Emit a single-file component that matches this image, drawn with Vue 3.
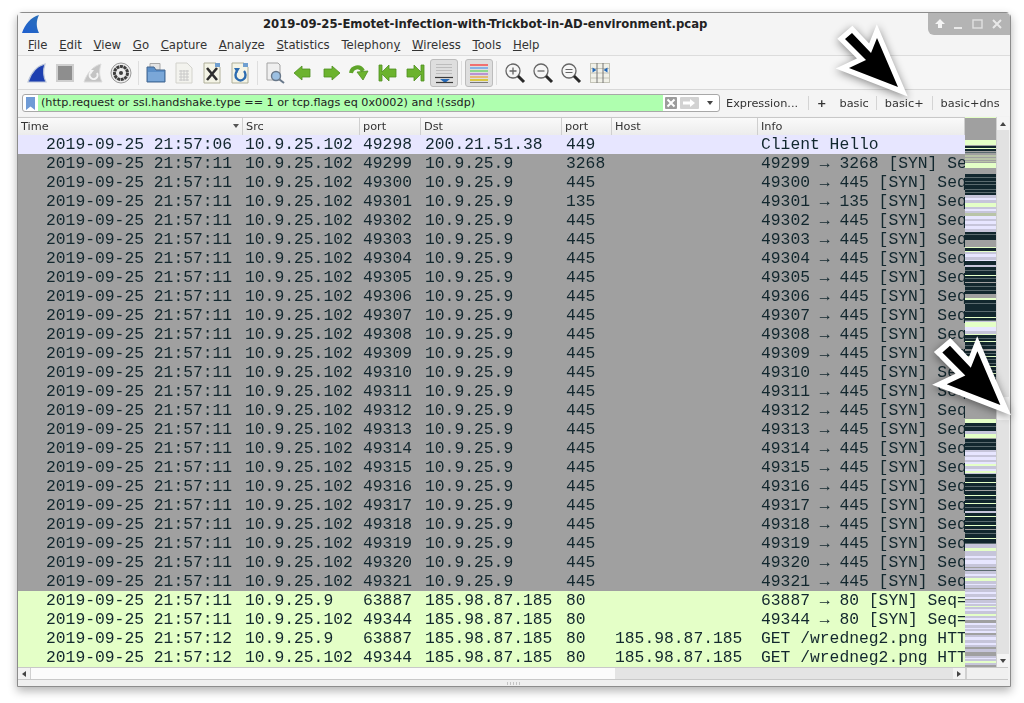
<script setup>
const menus = [
  ['F', 'ile'], ['E', 'dit'], ['V', 'iew'], ['G', 'o'], ['C', 'apture'], ['A', 'nalyze'],
  ['S', 'tatistics'], ['Telephon', 'y'], ['W', 'ireless'], ['T', 'ools'], ['H', 'elp'],
]

const columns = ['Time', 'Src', 'port', 'Dst', 'port', 'Host', 'Info']

const rows = [
  { kind: 'sel', time: '21:57:06', src: '10.9.25.102', sport: 49298, dst: '200.21.51.38', dport: 449, host: '', info: 'Client Hello' },
]

// the block of gray SYN rows, all to the DC
for (let port = 49299; port <= 49321; port++) {
  const dport = port === 49299 ? 3268 : port === 49301 ? 135 : 445
  rows.push({
    kind: 'gray',
    time: '21:57:11',
    src: '10.9.25.102',
    sport: port,
    dst: '10.9.25.9',
    dport,
    host: '',
    info: `${port} → ${dport} [SYN] Seq=0 Win=8192 Len=0`,
  })
}

rows.push(
  { kind: 'green', time: '21:57:11', src: '10.9.25.9', sport: 63887, dst: '185.98.87.185', dport: 80, host: '', info: '63887 → 80 [SYN] Seq=0 Win=8192' },
  { kind: 'green', time: '21:57:11', src: '10.9.25.102', sport: 49344, dst: '185.98.87.185', dport: 80, host: '', info: '49344 → 80 [SYN] Seq=0 Win=8192' },
  { kind: 'green', time: '21:57:12', src: '10.9.25.9', sport: 63887, dst: '185.98.87.185', dport: 80, host: '185.98.87.185', info: 'GET /wredneg2.png HTTP/1.1' },
  { kind: 'green', time: '21:57:12', src: '10.9.25.102', sport: 49344, dst: '185.98.87.185', dport: 80, host: '185.98.87.185', info: 'GET /wredneg2.png HTTP/1.1' },
)

// minimap stripes, colour key + height in px
const palette = {
  G: '#a0a0a0', L: '#e4ffc7', D: '#12272e', V: '#e7e6ff', M: '#c6c5da', X: '#5a6a6e', A: '#b9c4a8',
}
const stripes = [
  'L1 G22 L5 G1 D2 L1 D2 G1 X1 G2 A2 G1 A2 G1 A1 G1 L5 G6',
  'D3 X1 D3 X1 D2 X1 D4 X1 D2 X1 D2 M3 V2 M3 L4 M2 V2 M2 A3 V3 M2 V3 M2 V3 M3 D2 X1 D2 D3 G7',
  'L1 D3 L1 M2 V3 M3 V1 D4 M2 D3 X1 D4 L1 D2 X1 D3 G1 D3 X1 D3 X1 D3 G4 L2 D3 X1 D4 D3 X1 D3',
  'D2 L1 D2 X1 M1 L5 V4 M3 L1 D3 X1 D2 L1 D3 X1 D3 G2 D2 X1 D2 L1 D2 X1 D3 X1 D2 L1 D3 X1 D2 L1 D3 X1 D4 G1 D3 X1 D2 D3 X1 D3',
  'G23 L4 D3 X1 D4 M3 L4 G1 D3 X1 D3 X1 D3 M2 V3 M2 V3 M2 V2 L2 M3 V2 L2 M1 D3 X1 D4 L1 D3 X1 D3 G1 D4 L1 D3 X1 D3 L1 D3 X1 D3 M2',
  'D3 L1 D4 X1 D3 L1 D3 G1 D3 X1 D4 L1 D4 X1 M4',
  'L3 M2 M3 V2 M2 V4 M3 G1 M2 X1 M3 V2 M2 L3 M3 V1 M3 G1 M3 V2 M3 V2 G1 M3 V1 M2 L1 M2 V2 M3 L2 M2 V2 G3 V2 M3 V1 M2 V2 G2 M2 V3 M3 V2 M2 G2 M3 G4 M2 V1 M2 L2 M2',
]
const minimap = stripes.join(' ').split(' ').map((s) => ({
  color: palette[s[0]],
  height: Number(s.slice(1)),
}))
</script>

<template>
  <div class="page">
    <div class="window">
      <div class="titlebar">
        <svg class="logo" width="20" height="20" viewBox="0 0 20 20">
          <defs>
            <linearGradient id="fin" x1="0" y1="1" x2="1" y2="0">
              <stop offset="0" stop-color="#1f5fd0" />
              <stop offset="1" stop-color="#2a6fb8" />
            </linearGradient>
          </defs>
          <path d="M18 1 C10 3 4 10 1 19 L18 19 C15 13 15 7 18 1 Z" fill="url(#fin)" />
        </svg>
        <div class="title">2019-09-25-Emotet-infection-with-Trickbot-in-AD-environment.pcap</div>
        <div class="controls">
          <svg width="74" height="14" viewBox="0 0 74 14">
            <path d="M8 2 L13 7 L10 7 L10 11 L6 11 L6 7 L3 7 Z" fill="#fff" opacity=".85" />
            <rect x="22" y="10" width="8" height="2" fill="#fff" opacity=".7" />
            <rect x="41" y="3" width="9" height="8" fill="none" stroke="#fff" stroke-width="1.4" opacity=".6" />
            <path d="M61 3 L69 11 M69 3 L61 11" stroke="#fff" stroke-width="2" opacity=".7" />
          </svg>
        </div>
      </div>

      <div class="menubar">
        <span v-for="(m, i) in menus" :key="i" class="menu-item">
          <template v-if="m[0] === 'Telephon'">Telephon<u>y</u></template>
          <template v-else><u>{{ m[0] }}</u>{{ m[1] }}</template>
        </span>
      </div>

      <div class="toolbar">
        <div class="tool">
          <svg width="22" height="22" viewBox="0 0 22 22">
            <path d="M19 2 C11 4 5 11 2 20 L20 20 C17 14 17 8 19 2 Z" fill="#1d3fb0" stroke="#b9c4d8" stroke-width="1.2" />
          </svg>
        </div>
        <div class="tool">
          <svg width="22" height="22" viewBox="0 0 22 22">
            <rect x="3" y="3" width="16" height="16" fill="#8e8e8e" stroke="#cfcfcf" stroke-width="2" />
          </svg>
        </div>
        <div class="tool">
          <svg width="22" height="22" viewBox="0 0 22 22">
            <path d="M19 2 C11 4 5 11 2 20 L20 20 C17 14 17 8 19 2 Z" fill="#c4c4c4" stroke="#dcdcdc" />
            <path d="M15 11 A4 4 0 1 1 9 10" fill="none" stroke="#f4f4f4" stroke-width="2" />
            <path d="M7 8 L12 8 L9 12 Z" fill="#f4f4f4" />
          </svg>
        </div>
        <div class="tool">
          <svg width="22" height="22" viewBox="0 0 22 22">
            <circle cx="11" cy="11" r="10" fill="#ececec" stroke="#9a9a9a" />
            <circle cx="11" cy="11" r="6.5" fill="none" stroke="#3e3e3e" stroke-width="3" stroke-dasharray="3 .6" />
            <circle cx="11" cy="11" r="2" fill="#3e3e3e" />
          </svg>
        </div>
        <div class="sep"></div>
        <div class="tool">
          <svg width="22" height="22" viewBox="0 0 22 22">
            <path d="M5 4 L5 1.5 L15 1.5 L15 8 L5 8 Z" fill="#e4e4e4" stroke="#a8a8a8" />
            <path d="M2 5 L9 5 L11 8 L20 8 L20 20 L2 20 Z" fill="#5b8fc8" stroke="#44678f" />
            <rect x="3" y="10" width="16" height="9" fill="#7aa7d8" />
          </svg>
        </div>
        <div class="tool">
          <svg width="22" height="22" viewBox="0 0 22 22">
            <path d="M3 1 L14 1 L19 6 L19 21 L3 21 Z" fill="#f3f3ee" stroke="#d2d2cc" />
            <path d="M6 9 H16 M6 12 H16 M6 15 H16 M6 18 H16 M8 8 V19 M11 8 V19 M14 8 V19" stroke="#c8c8c8" stroke-width="1" />
          </svg>
        </div>
        <div class="tool">
          <svg width="22" height="22" viewBox="0 0 22 22">
            <path d="M3 1 L15 1 L19 5 L19 21 L3 21 Z" fill="#f4f4e6" stroke="#b0b09a" />
            <rect x="14" y="1" width="5" height="4" fill="#6f9fd0" />
            <path d="M6 6 L16 18 M16 6 L6 18" stroke="#2e2e2e" stroke-width="2.6" />
          </svg>
        </div>
        <div class="tool">
          <svg width="22" height="22" viewBox="0 0 22 22">
            <path d="M3 1 L15 1 L19 5 L19 21 L3 21 Z" fill="#f4f4e6" stroke="#b0b09a" />
            <rect x="14" y="1" width="5" height="4" fill="#6f9fd0" />
            <path d="M15 9 A5 5.5 0 1 1 8 9" fill="none" stroke="#2c6cb0" stroke-width="2.4" />
            <path d="M5 6 L11 6 L8 11 Z" fill="#2c6cb0" />
          </svg>
        </div>
        <div class="sep"></div>
        <div class="tool">
          <svg width="22" height="22" viewBox="0 0 22 22">
            <path d="M3 1 L14 1 L16 3 L16 18 L3 18 Z" fill="#efefef" stroke="#a4a4a4" />
            <circle cx="12" cy="14" r="4.5" fill="#9cc0e2" stroke="#68788a" stroke-width="1.4" />
            <path d="M15.5 17.5 L20 21" stroke="#68788a" stroke-width="2" />
          </svg>
        </div>
        <div class="tool">
          <svg width="22" height="22" viewBox="0 0 22 22">
            <path class="go" d="M2 11 L10 4 L10 7 L18 7 L18 15 L10 15 L10 18 Z" />
          </svg>
        </div>
        <div class="tool">
          <svg width="22" height="22" viewBox="0 0 22 22">
            <path class="go" d="M20 11 L12 4 L12 7 L4 7 L4 15 L12 15 L12 18 Z" />
          </svg>
        </div>
        <div class="tool">
          <svg width="22" height="22" viewBox="0 0 22 22">
            <path d="M3 11 C4 5 12 3 15 9" fill="none" stroke="#5fa52a" stroke-width="4" />
            <path class="go" d="M20 9 L15 18 L9 10 Z" />
          </svg>
        </div>
        <div class="tool">
          <svg width="22" height="22" viewBox="0 0 22 22">
            <path class="go" d="M3 3 L6 3 L6 10 L13 3 L13 7 L20 7 L20 15 L13 15 L13 19 L6 12 L6 19 L3 19 Z" />
          </svg>
        </div>
        <div class="tool">
          <svg width="22" height="22" viewBox="0 0 22 22">
            <path class="go" d="M20 3 L17 3 L17 10 L10 3 L10 7 L3 7 L3 15 L10 15 L10 19 L17 12 L17 19 L20 19 Z" />
          </svg>
        </div>
        <div class="tool pressed first-pressed">
          <svg width="22" height="22" viewBox="0 0 22 22">
            <path d="M3 2.5 H19 M3 5.5 H19 M3 8.5 H19 M3 11.5 H19" stroke="#bcbcbc" />
            <path d="M2 15.5 H20" stroke="#3c3c3c" stroke-width="1.2" />
            <path d="M7 17 H17 L12 21 Z" fill="#2368b8" />
            <path d="M3 20.5 H20" stroke="#3c3c3c" stroke-width="1.2" />
          </svg>
        </div>
        <div class="sep"></div>
        <div class="tool pressed">
          <svg width="22" height="22" viewBox="0 0 22 22">
            <path d="M2 3 H20" stroke="#f07070" stroke-width="2" />
            <path d="M2 6 H20" stroke="#70a8e8" stroke-width="1.6" />
            <path d="M2 9 H20" stroke="#78d878" stroke-width="1.6" />
            <path d="M2 12 H20" stroke="#b080d0" stroke-width="1.6" />
            <path d="M2 15 H20" stroke="#e8b060" stroke-width="1.6" />
            <path d="M2 18 H20" stroke="#d8c840" stroke-width="2" />
            <path d="M2 20.5 H20" stroke="#777" />
          </svg>
        </div>
        <div class="sep wide"></div>
        <div class="tool">
          <svg width="22" height="22" viewBox="0 0 22 22">
            <circle cx="9" cy="9" r="7" fill="#f6f6f6" stroke="#666" stroke-width="1.3" />
            <path d="M5.5 9 H12.5 M9 5.5 V12.5" stroke="#666" stroke-width="1.3" />
            <path d="M14 14 L20 20" stroke="#2a2a2a" stroke-width="3" />
          </svg>
        </div>
        <div class="tool">
          <svg width="22" height="22" viewBox="0 0 22 22">
            <circle cx="9" cy="9" r="7" fill="#f6f6f6" stroke="#666" stroke-width="1.3" />
            <path d="M5.5 9 H12.5" stroke="#666" stroke-width="1.3" />
            <path d="M14 14 L20 20" stroke="#2a2a2a" stroke-width="3" />
          </svg>
        </div>
        <div class="tool">
          <svg width="22" height="22" viewBox="0 0 22 22">
            <circle cx="9" cy="9" r="7" fill="#f6f6f6" stroke="#666" stroke-width="1.3" />
            <path d="M5.5 7.5 H12.5 M5.5 10.5 H12.5" stroke="#666" stroke-width="1.2" />
            <path d="M14 14 L20 20" stroke="#2a2a2a" stroke-width="3" />
          </svg>
        </div>
        <div class="tool last-tool">
          <svg width="22" height="22" viewBox="0 0 22 22">
            <rect x="1.5" y="1.5" width="19" height="19" fill="#f1f1e8" stroke="#c4c4b8" />
            <path d="M1 6.5 H21 M1 11 H21 M1 16 H21" stroke="#c4c4b8" />
            <path d="M8 1 V21 M14 1 V21" stroke="#777" />
            <path d="M7.5 8 L3.5 5.5 V10.5 Z M14.5 8 L18.5 5.5 V10.5 Z" fill="#2368b8" />
          </svg>
        </div>
      </div>

      <div class="filterbar">
        <div class="field">
          <div class="bookmark">
            <svg width="9" height="13" viewBox="0 0 9 13">
              <path d="M0 0 H9 V13 L4.5 9.5 L0 13 Z" fill="#6f9bd6" />
            </svg>
          </div>
          <div class="expr">(http.request or ssl.handshake.type == 1 or tcp.flags eq 0x0002) and !(ssdp)</div>
          <div class="clear">
            <svg width="12" height="12" viewBox="0 0 12 12">
              <rect width="12" height="12" rx="1" fill="#9c9c9c" />
              <path d="M2.5 2.5 L9.5 9.5 M9.5 2.5 L2.5 9.5" stroke="#fff" stroke-width="2" />
            </svg>
          </div>
          <div class="apply">
            <svg width="19" height="12" viewBox="0 0 19 12">
              <rect width="19" height="12" rx="1" fill="#d2d2d2" />
              <path d="M3 4.5 H10 V2 L15 6 L10 10 V7.5 H3 Z" fill="#fff" />
            </svg>
          </div>
          <div class="drop"><span class="tri"></span></div>
        </div>
        <span class="expression">Expression...</span>
        <span class="vsep"></span>
        <span class="fbtn plus">+</span>
        <span class="fbtn basic">basic</span>
        <span class="vsep"></span>
        <span class="fbtn">basic+</span>
        <span class="vsep"></span>
        <span class="fbtn">basic+dns</span>
      </div>

      <div class="content">
        <div class="table">
          <div class="head">
            <div v-for="(c, i) in columns" :key="i" class="hcell">
              {{ c }}
              <span v-if="i === 0" class="sort"></span>
            </div>
          </div>
          <div v-for="r in rows" :key="r.sport + r.time" class="row" :class="r.kind">
            <div class="cell time">2019-09-25 {{ r.time }}</div>
            <div class="cell">{{ r.src }}</div>
            <div class="cell">{{ r.sport }}</div>
            <div class="cell">{{ r.dst }}</div>
            <div class="cell">{{ r.dport }}</div>
            <div class="cell">{{ r.host }}</div>
            <div class="cell">{{ r.info }}</div>
          </div>
        </div>

        <div class="minimap">
          <div
            v-for="(s, i) in minimap"
            :key="i"
            class="stripe"
            :style="{ background: s.color, height: s.height + 'px' }"
          ></div>
        </div>

        <div class="vscroll">
          <div class="sbtn"><span class="tri up"></span></div>
          <div class="vtrack">
            <div class="vthumb"></div>
          </div>
          <div class="sbtn"><span class="tri"></span></div>
        </div>
      </div>

      <div class="hscroll">
        <div class="hbtn"><span class="tri left"></span></div>
        <div class="hthumb"></div>
        <div class="htrack"></div>
        <div class="hbtn"><span class="tri right"></span></div>
        <div class="corner"></div>
      </div>

      <div class="statusbar"><span class="grip"></span></div>
    </div>

    <svg class="arrow arrow-one" width="84" height="84" viewBox="0 0 84 84">
      <polygon points="14,15 21,9 40,29 46,14 67,63 18,44 35,36" />
    </svg>
    <svg class="arrow arrow-two" width="92" height="92" viewBox="0 0 84 84">
      <polygon points="14,15 21,9 40,29 46,14 67,63 18,44 35,36" />
    </svg>
  </div>
</template>

<style>
html,
body {
  background: #fff;
}
</style>

<style scoped>
.page {
  position: relative;
  width: 1024px;
  height: 703px;
  box-sizing: border-box;
  padding: 12px 13px 16px 17px;
  overflow: hidden;
  background: #fff;
  font-family: "DejaVu Sans", sans-serif;
  color: #333;
  font-size: 11.2px;
}

.window {
  height: 100%;
  box-sizing: border-box;
  display: flex;
  flex-direction: column;
  background: #f2f2f2;
  border: 1px solid #8c8c8c;
  border-radius: 5px 5px 0 0;
  box-shadow: 0 4px 10px rgba(0, 0, 0, 0.3);
  filter: blur(0.35px);
}

.titlebar {
  height: 22px;
  flex: none;
  display: flex;
  align-items: center;
  padding-left: 3px;
  background: #f4f4f4;
}

.logo {
  flex: none;
}

.title {
  flex: 1;
  padding-left: 222px;
  font-weight: bold;
  font-size: 11.67px;
  color: #222;
  white-space: nowrap;
}

.controls {
  flex: none;
  width: 82px;
  height: 22px;
  margin-top: -1px;
  display: flex;
  align-items: center;
  justify-content: center;
  background: #b4b4b4;
  border-radius: 0 4px 0 6px;
}

.menubar {
  height: 20px;
  flex: none;
  display: flex;
  align-items: center;
  gap: 11.7px;
  padding-left: 10px;
  font-size: 11.67px;
  border-bottom: 1px solid #dcdcdc;
  background: #f4f4f4;
}

.toolbar {
  height: 33px;
  flex: none;
  display: flex;
  align-items: center;
  padding-left: 5px;
  border-bottom: 1px solid #d8d8d8;
  background: #f6f6f6;
}

.tool {
  width: 28px;
  height: 28px;
  flex: none;
  display: flex;
  align-items: center;
  justify-content: center;
}

.tool.pressed {
  box-sizing: border-box;
  background: #dedede;
  border: 1px solid #bcbcbc;
  border-radius: 3px;
}

.first-pressed {
  margin-left: 1px;
}

.last-tool {
  margin-left: 1px;
}

.sep {
  width: 1px;
  height: 24px;
  flex: none;
  margin: 0 3px;
  background: #dedede;
}

.sep.wide {
  margin-right: 4px;
}

.go {
  fill: #6cb32e;
  stroke: #4f8f22;
  stroke-width: 0.8;
}

.filterbar {
  height: 26px;
  flex: none;
  display: flex;
  align-items: center;
  padding-left: 4px;
  background: #f4f4f4;
}

.field {
  width: 698px;
  height: 18px;
  flex: none;
  box-sizing: border-box;
  display: flex;
  align-items: center;
  background: #fff;
  border: 1px solid #a8a8a8;
  border-radius: 3px;
}

.bookmark {
  width: 15px;
  flex: none;
  display: flex;
  justify-content: center;
}

.expr {
  width: 625px;
  height: 16px;
  flex: none;
  box-sizing: border-box;
  padding: 0 3px;
  line-height: 16px;
  color: #222;
  background: #afffaf;
  white-space: nowrap;
}

.clear {
  width: 15px;
  flex: none;
  display: flex;
  justify-content: center;
}

.apply {
  width: 22px;
  flex: none;
  display: flex;
  justify-content: center;
}

.drop {
  flex: 1;
  display: flex;
  justify-content: center;
}

.tri {
  display: block;
  width: 0;
  height: 0;
  border-left: 3.5px solid transparent;
  border-right: 3.5px solid transparent;
  border-top: 4px solid #444;
}

.tri.up {
  border-top: 0;
  border-bottom: 4px solid #444;
}

.tri.left {
  border: 0;
  border-top: 3.5px solid transparent;
  border-bottom: 3.5px solid transparent;
  border-right: 4px solid #444;
}

.tri.right {
  border: 0;
  border-top: 3.5px solid transparent;
  border-bottom: 3.5px solid transparent;
  border-left: 4px solid #444;
}

.expression {
  margin-left: 6px;
  width: 82px;
  flex: none;
  font-size: 11.3px;
  white-space: nowrap;
}

.vsep {
  width: 1px;
  height: 14px;
  flex: none;
  background: #d4d4d4;
}

.fbtn {
  flex: none;
  margin: 0 8px;
  font-size: 11.3px;
  white-space: nowrap;
}

.fbtn.plus {
  font-weight: bold;
  margin-right: 5px;
}

.fbtn.basic {
  margin-right: 7px;
}

.content {
  flex: none;
  height: 550px;
  margin-top: 1px;
  display: flex;
  overflow: hidden;
}

.table {
  width: 947px;
  flex: none;
  overflow: hidden;
}

.head {
  display: grid;
  grid-template-columns: 225px 117px 61px 141px 50px 146px 207px;
  height: 18px;
  background: linear-gradient(#fafafa, #ececec);
  border-top: 1px solid #c8c8c8;
  box-sizing: border-box;
}

.hcell {
  position: relative;
  padding-left: 3px;
  line-height: 17px;
  font-size: 11.3px;
  border-right: 1px solid #cfcfcf;
  color: #333;
}

.sort {
  position: absolute;
  right: 3px;
  top: 6px;
  width: 0;
  height: 0;
  border-left: 3.5px solid transparent;
  border-right: 3.5px solid transparent;
  border-top: 4px solid #555;
}

.row {
  display: grid;
  grid-template-columns: 224px 118px 62px 141px 49px 146px 207px;
  grid-template-rows: 19px;
  height: 19px;
  line-height: 19px;
  font-family: "Liberation Mono", monospace;
  font-size: 16.33px;
  color: #12272e;
}

.row.sel {
  background: #e7e6ff;
}

.row.gray {
  background: #a0a0a0;
}

.row.green {
  background: #e4ffc7;
}

.cell {
  padding-left: 3px;
  overflow: hidden;
  white-space: nowrap;
}

.cell.time {
  padding-left: 28px;
}

.minimap {
  width: 31px;
  flex: none;
  display: flex;
  flex-direction: column;
  overflow: hidden;
  background: #a0a0a0;
}

.stripe {
  flex: none;
}

.vscroll {
  width: 12px;
  flex: none;
  display: flex;
  flex-direction: column;
  background: #e2e2e2;
  border-left: 1px solid #cfcfcf;
}

.sbtn {
  height: 13px;
  flex: none;
  display: flex;
  align-items: center;
  justify-content: center;
  background: #f4f4f4;
}

.vtrack {
  flex: 1;
  padding-top: 267px;
}

.vthumb {
  height: 23px;
  background: #f4f4f4;
}

.hscroll {
  height: 11px;
  flex: none;
  display: flex;
  margin-right: 2px;
  border-top: 1px solid #c8c8c8;
  border-bottom: 1px solid #c8c8c8;
  box-sizing: content-box;
}

.hbtn {
  width: 12px;
  flex: none;
  display: flex;
  align-items: center;
  justify-content: center;
  background: #f2f2f2;
  border-right: 1px solid #d0d0d0;
}

.hthumb {
  width: 584px;
  flex: none;
  background: #fbfbfb;
}

.htrack {
  width: 338px;
  flex: none;
  background: #e4e4e4;
}

.corner {
  flex: 1;
  background: #f0f0f0;
  border-left: 1px solid #d0d0d0;
}

.statusbar {
  flex: 1;
  display: flex;
  align-items: center;
  justify-content: center;
  background: #efefef;
}

.grip {
  width: 14px;
  height: 3px;
  background: repeating-linear-gradient(90deg, #c4c4c4 0 1px, transparent 1px 3px);
}

.arrow {
  position: absolute;
  overflow: visible;
  filter: drop-shadow(0 2px 4px rgba(0, 0, 0, 0.45));
}

.arrow polygon {
  fill: #000;
  stroke: #fff;
  stroke-width: 10.5;
  stroke-linejoin: miter;
  stroke-miterlimit: 10;
  paint-order: stroke;
}

.arrow-one {
  left: 831px;
  top: 24px;
}

.arrow-two {
  left: 927px;
  top: 336px;
}
</style>
